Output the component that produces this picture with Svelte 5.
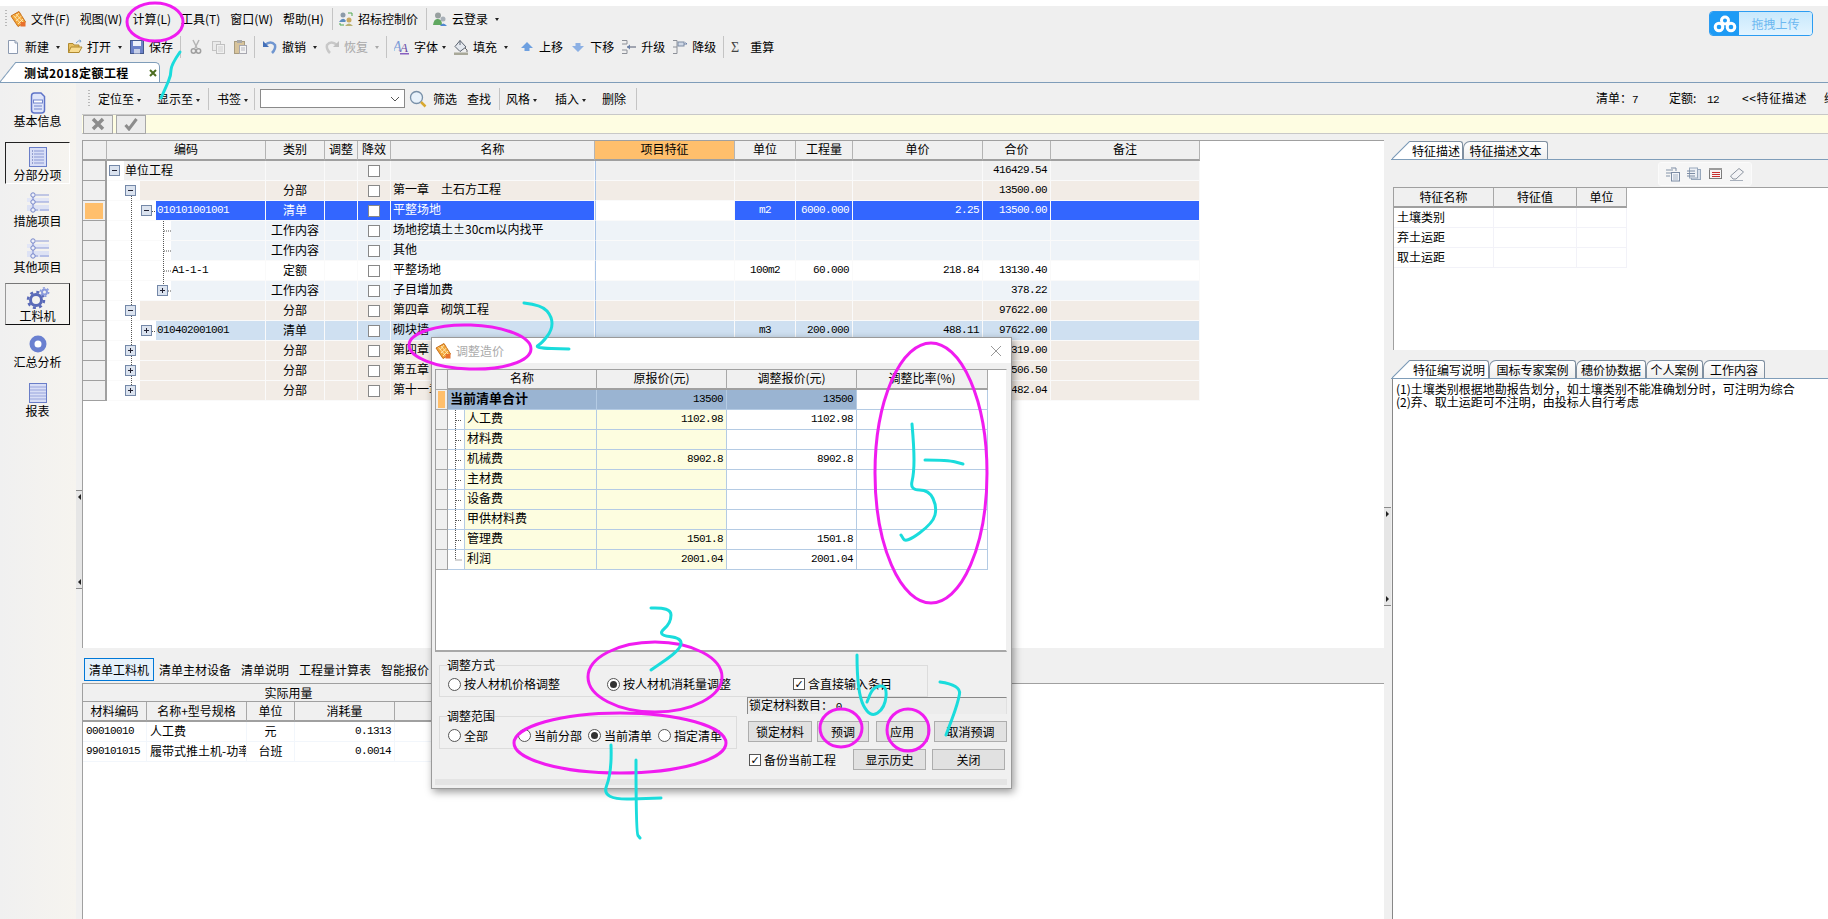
<script>
    const menu = ['文件(F)', '视图(W)', '计算(L)', '工具(T)', '窗口(W)', '帮助(H)'];

    const tools = [
        { icon: 'new', label: '新建', caret: true },
        { icon: 'open', label: '打开', caret: true },
        { icon: 'save', label: '保存' },
        { sep: true },
        { icon: 'cut' }, { icon: 'copy' }, { icon: 'paste' },
        { sep: true },
        { icon: 'undo', label: '撤销', caret: true },
        { icon: 'redo', label: '恢复', caret: true, dim: true },
        { sep: true },
        { icon: 'font', label: '字体', caret: true, tight: true },
        { icon: 'fill', label: '填充', caret: true, roomy: true },
        { icon: 'up', label: '上移' },
        { icon: 'down', label: '下移', roomy: false },
        { icon: 'promote', label: '升级' },
        { icon: 'demote', label: '降级' },
        { sep: true }
    ];

    const side = [
        { icon: 'sdoc', label: '基本信息' },
        { icon: 'slist', label: '分部分项', cls: 'm12 pressed' },
        { icon: 'stree', label: '措施项目' },
        { icon: 'stree', label: '其他项目' },
        { icon: 'sgear', label: '工料机', cls: 'm7 raised' },
        { icon: 'sring', label: '汇总分析' },
        { icon: 'sreport', label: '报表', cls: 'm7' }
    ];

    const rows = [
        { lv: 0, box: 'minus', kind: 'root', code: '单位工程', cjk: true, total: '416429.54' },
        { lv: 1, box: 'minus', kind: 'fb', type: '分部', name: '第一章　土石方工程', total: '13500.00' },
        { lv: 2, box: 'minus', kind: 'sel', code: '010101001001', type: '清单', name: '平整场地', unit: 'm2', qty: '6000.000', price: '2.25', total: '13500.00' },
        { lv: 3, kind: 'wc', type: '工作内容', name: '场地挖填土±30cm以内找平' },
        { lv: 3, kind: 'wc', type: '工作内容', name: '其他' },
        { lv: 3, kind: 'de', code: 'A1-1-1', type: '定额', name: '平整场地', unit: '100m2', qty: '60.000', price: '218.84', total: '13130.40' },
        { lv: 3, box: 'plus', kind: 'wc', type: '工作内容', name: '子目增加费', total: '378.22' },
        { lv: 1, box: 'minus', kind: 'fb', type: '分部', name: '第四章　砌筑工程', total: '97622.00' },
        { lv: 2, box: 'plus', kind: 'qd', code: '010402001001', type: '清单', name: '砌块墙', unit: 'm3', qty: '200.000', price: '488.11', total: '97622.00' },
        { lv: 1, box: 'plus', kind: 'fb', type: '分部', name: '第四章', total: '12319.00' },
        { lv: 1, box: 'plus', kind: 'fb', type: '分部', name: '第五章', total: '45506.50' },
        { lv: 1, box: 'plus', kind: 'fb', type: '分部', name: '第十一章', total: '76482.04' }
    ];

    const costs = [
        ['人工费', '1102.98', '1102.98'],
        ['材料费', '', ''],
        ['机械费', '8902.8', '8902.8'],
        ['主材费', '', ''],
        ['设备费', '', ''],
        ['甲供材料费', '', ''],
        ['管理费', '1501.8', '1501.8'],
        ['利润', '2001.04', '2001.04']
    ];

    const ink = [
        [[180, 52], [171, 65], [171, 75], [166, 87], [161, 98]],
        [[524, 303], [542, 305], [552, 317], [552, 330], [542, 343], [534, 348], [569, 349]],
        [[912, 424], [914, 447], [914, 473], [910, 490], [929, 490], [937, 507], [933, 523], [906, 543], [901, 535]],
        [[925, 460], [948, 460], [963, 464]],
        [[651, 608], [671, 607], [671, 623], [657, 635], [682, 638], [680, 650], [651, 670]],
        [[611, 745], [612, 772], [601, 800], [661, 798]],
        [[636, 760], [636, 833], [640, 838]],
        [[857, 655], [857, 693], [870, 718], [885, 708], [887, 685], [873, 687], [867, 702]],
        [[940, 682], [961, 685], [958, 703], [946, 735]]
    ];

    const rings = [
        [155, 22, 28, 19, 0],
        [470, 347, 61, 22, 2],
        [931, 473, 56, 130, 0],
        [655, 677, 67, 35, 0],
        [620, 743, 106, 30, 0],
        [841, 728, 21, 19, 0],
        [908, 730, 21, 21, 0]
    ];

    // pen strokes, rounded through the midpoints
    const smooth = (pts) => {
        let d = `M${pts[0][0]} ${pts[0][1]}`;
        for (let i = 1; i < pts.length - 1; i++) {
            const mx = (pts[i][0] + pts[i + 1][0]) / 2;
            const my = (pts[i][1] + pts[i + 1][1]) / 2;
            d += ` Q${pts[i][0]} ${pts[i][1]} ${mx} ${my}`;
        }
        const last = pts[pts.length - 1];
        return `${d} L${last[0]} ${last[1]}`;
    };
</script>

{#snippet ic(n)}
    <svg class="ic" viewBox="0 0 16 16" width="16" height="16">
        {#if n === 'app'}
            <path d="M1 5 L9 0.500 L15.500 11 L8 15.500 Z" fill="#f2a63a" stroke="#c8701c" />
            <path d="M3.500 4.500 L11 13 M6 3 L13 11 M9 2 L5 7 M11.500 5 L6 10 M13 8 L8 13" stroke="#ffe9b4" stroke-width=".9" />
            <rect x="10.500" y="11" width="5" height="4.500" fill="#e8702c" />
        {:else if n === 'people'}
            <circle cx="5" cy="4" r="2.500" fill="#8c9aa8" />
            <path d="M1 11 Q5 5 8 10 L7 11 Z" fill="#5c8cc0" />
            <circle cx="11" cy="9" r="2.500" fill="#c8a860" />
            <path d="M7 15 Q11 10 15 15 Z" fill="#b8b070" />
            <path d="M10 2 h4 v3 M6 14 h-4 v-2" fill="none" stroke="#50a850" />
        {:else if n === 'cloud'}
            <circle cx="6" cy="4.500" r="3" fill="#98a0a0" />
            <path d="M1 14 Q2 7 6 8 Q10 8 10 14 Z" fill="#60a860" />
            <circle cx="11" cy="8" r="2.500" fill="#a8b0b8" />
            <path d="M8 15 Q11 10 15 15 Z" fill="#5088d0" />
        {:else if n === 'new'}
            <path d="M3.500 1.500 H10 L12.500 4 V14.500 H3.500 Z" fill="#fbfcff" stroke="#8c9ab0" />
            <path d="M10 1.500 V4 H12.500" fill="#dde3ee" stroke="#8c9ab0" />
        {:else if n === 'open'}
            <path d="M1.500 13.500 V4.500 H6 L7 6 H12 V13.500 Z" fill="#e8c060" stroke="#b08a30" />
            <path d="M1.500 13.500 L4 8 H15 L12 13.500 Z" fill="#f8dc90" stroke="#b08a30" />
            <path d="M9 4 Q11 1 14 2 M14 2 L12.500 1 M14 2 L13 3.500" fill="none" stroke="#7aa0c8" />
        {:else if n === 'save'}
            <rect x="1.500" y="1.500" width="13" height="13" fill="#6c82c8" stroke="#44588c" />
            <rect x="4" y="2" width="8" height="5" fill="#eef1fa" />
            <rect x="5" y="10" width="6" height="4.500" fill="#c8d0e8" />
        {:else if n === 'cut'}
            <path d="M5 1 L9 9 M11 1 L7 9" stroke="#b4b4b4" stroke-width="1.500" />
            <circle cx="5.500" cy="12" r="2.200" fill="none" stroke="#a0a0a0" stroke-width="1.500" />
            <circle cx="10.500" cy="12" r="2.200" fill="none" stroke="#a0a0a0" stroke-width="1.500" />
        {:else if n === 'copy'}
            <rect x="2.500" y="2.500" width="8" height="9" fill="#eaeaea" stroke="#c4c4c4" />
            <rect x="6.500" y="5.500" width="8" height="9" fill="#f0f0f0" stroke="#c0c0c0" />
            <path d="M8 8 h5 M8 10 h5 M8 12 h5" stroke="#d0d0d0" />
        {:else if n === 'paste'}
            <rect x="2.500" y="2.500" width="10" height="12" fill="#d8c49c" stroke="#a89c80" />
            <rect x="5" y="1" width="5" height="3" fill="#a8a8a8" />
            <rect x="7.500" y="6.500" width="7" height="8" fill="#f4f4f4" stroke="#a8a8b0" />
            <path d="M9 9 h4 M9 11 h4" stroke="#b8b8c0" />
        {:else if n === 'undo' || n === 'redo'}
            <g transform={n === 'redo' ? 'translate(16 0) scale(-1 1)' : ''}>
                <path d="M3 6 Q9 1 13 6 Q14 10 10 14" fill="none" stroke={n === 'redo' ? '#c8c8c8' : '#7096d0'} stroke-width="2.500" />
                <path d="M1 2 V8 H7 Z" fill={n === 'redo' ? '#c0c0c0' : '#4470b8'} />
            </g>
        {:else if n === 'font'}
            <text x="-1" y="12" font-size="14" font-style="italic" font-family="Liberation Serif" fill="#7c9cd8">A</text>
            <text x="6" y="13" font-size="13" font-style="italic" font-family="Liberation Serif" fill="#6c50a8">A</text>
            <rect x="6" y="14" width="9" height="1.500" fill="#8860c0" />
        {:else if n === 'fill'}
            <path d="M7 1.500 L13 8 L7 12.500 L2 7.500 Z" fill="#e4e8ee" stroke="#5c6470" />
            <path d="M7 1.500 V6" stroke="#5c6470" />
            <rect x="1" y="13.500" width="14" height="2.500" fill="#a8a898" />
            <path d="M12 9 Q15 11 14 13" fill="none" stroke="#666" />
        {:else if n === 'up'}
            <path d="M8 3 L14 9 H10.500 V12 H5.500 V9 H2 Z" fill="#6ea0e0" />
        {:else if n === 'down'}
            <path d="M8 13 L14 7 H10.500 V4 H5.500 V7 H2 Z" fill="#8cb0e4" />
        {:else if n === 'promote'}
            <path d="M1 1.500 H6 V5 H1 M1 11 H6 V14.500 H1" fill="none" stroke="#8c9098" />
            <path d="M6 8 H15" stroke="#a0a4b0" stroke-width="2" />
            <path d="M9 5.500 L6 8 L9 10.500 Z" fill="#6a80a8" />
        {:else if n === 'demote'}
            <path d="M1 1.500 H5 V14.500 H1 M1 8 H5" fill="none" stroke="#8c9098" />
            <rect x="6" y="3" width="6" height="4" fill="#cfd8e6" stroke="#7c8ca4" />
            <path d="M12 5 H15 M15 5 L13.500 3.500" stroke="#6a80a8" />
        {:else if n === 'sigma'}
            <text x="1" y="13" font-size="14" font-family="Liberation Serif" fill="#444">Σ</text>
        {:else if n === 'mini1'}
            <path d="M1 4 H8 M1 7 H8 M1 10 H5" stroke="#8494a8" />
            <rect x="6.500" y="6.500" width="8" height="8.500" fill="#f4f6fa" stroke="#7c8ca4" />
            <path d="M8 9 h5 M8 11 h5 M8 13 h5" stroke="#a8b4c4" />
            <path d="M6 2 H11 V5" fill="none" stroke="#7c8ca4" />
        {:else if n === 'mini2'}
            <rect x="5.500" y="3.500" width="9" height="10" fill="#d8dfea" stroke="#98a8bc" />
            <rect x="3.500" y="2" width="8" height="10" fill="#eef1f6" stroke="#98a8bc" />
            <path d="M1 5 H9 M1 7.500 H9 M1 10 H9" stroke="#7c8ca4" />
        {:else if n === 'mini3'}
            <rect x="1.500" y="2.500" width="12" height="10" fill="#f6f6f6" stroke="#7c7c7c" />
            <rect x="1" y="2" width="13" height="2" fill="#9c9c9c" />
            <path d="M4 6.500 H12 M4 8.500 H12 M4 10.500 H12" stroke="#c83030" />
        {:else if n === 'mini4'}
            <path d="M1.500 10 L10 2.500 L14.500 6 L7 13 H4 Z" fill="#f4f4f6" stroke="#8c94a0" />
            <path d="M1 14.500 H14" stroke="#a8b0bc" />
        {/if}
    </svg>
{/snippet}

{#snippet sideicon(n)}
    <svg class="sic" viewBox="0 0 24 22" width="24" height="22">
        {#if n === 'sdoc'}
            <path d="M5.500 4 Q5.500 1 8.500 1 H15 L18.500 4.500 V18 Q18.500 21 15.500 21 H8.500 Q5.500 21 5.500 18 Z" fill="#dfe5fa" stroke="#5f74c8" stroke-width="1.500" />
            <rect x="7.500" y="8" width="9" height="3" fill="#fff" stroke="#7084cc" />
            <path d="M8 14 H16 M8 17 H16" stroke="#7084cc" />
        {:else if n === 'slist' || n === 'sreport'}
            <rect x="3.500" y="1.500" width="17" height="19" fill="#d8def6" stroke="#6a7ec8" />
            {#if n === 'slist'}
                <path d="M8 5 H18 M8 8 H18 M8 11 H18 M8 14 H18 M8 17 H18" stroke="#8a98d4" stroke-width="1.200" />
                <path d="M6 5 H7 M6 8 H7 M6 11 H7 M6 14 H7 M6 17 H7" stroke="#5060a8" />
            {:else}
                <path d="M4 5 H20 M4 8 H20 M4 11 H20 M4 14 H20 M4 17 H20" stroke="#97a4dc" stroke-width="1.200" />
            {/if}
        {:else if n === 'stree'}
            <rect x="1" y="6" width="22" height="4" fill="#e2e6f6" />
            <rect x="1" y="13" width="22" height="6" fill="#dde2f4" />
            <path d="M7 3 V18 H12 M7 10 H12 M10 3 H23 M10 10 H23 M14 18 H23" fill="none" stroke="#8c9ad8" stroke-width="1.200" />
            <circle cx="7" cy="3" r="2.200" fill="#eef0fa" stroke="#7484c8" />
            <circle cx="7" cy="10" r="2.200" fill="#eef0fa" stroke="#7484c8" />
            <circle cx="7" cy="18" r="2.200" fill="#eef0fa" stroke="#7484c8" />
        {:else if n === 'sgear'}
            <circle cx="10" cy="13" r="5.500" fill="none" stroke="#5a6ab8" stroke-width="3" />
            <circle cx="10" cy="13" r="8" fill="none" stroke="#5a6ab8" stroke-width="2.500" stroke-dasharray="3 3.300" />
            <circle cx="18.500" cy="5" r="2.500" fill="none" stroke="#8a9adc" stroke-width="2" />
            <circle cx="18.500" cy="5" r="4.200" fill="none" stroke="#8a9adc" stroke-width="1.500" stroke-dasharray="2 2.400" />
        {:else if n === 'sring'}
            <circle cx="12" cy="11" r="6" fill="#fff" stroke="#6a80d0" stroke-width="5" />
        {/if}
    </svg>
{/snippet}

{#snippet treebox(kind)}
    <svg class="tb" viewBox="0 0 11 11" width="11" height="11">
        <rect x=".5" y=".5" width="10" height="10" fill="#dbe3ef" stroke="#7488a8" />
        <path d={kind === 'plus' ? 'M3 5.500 H8 M5.500 3 V8' : 'M3 5.500 H8'} stroke="#223" />
    </svg>
{/snippet}

<div class="app">
    <div class="topline"></div>

    <header class="top">
        <div class="menubar">
            <span class="grip"></span>
            {@render ic('app')}
            {#each menu as m}<span class="menu">{m}</span>{/each}
            <span class="sep"></span>
            <span class="ti">{@render ic('people')}<span>招标控制价</span></span>
            <span class="sep"></span>
            <span class="ti">{@render ic('cloud')}<span>云登录</span><i class="caret"></i></span>
        </div>
        <div class="toolbar">
            {#each tools as t}
                {#if t.sep}
                    <span class="sep"></span>
                {:else}
                    <span class="ti" class:dim={t.dim} class:tight={t.tight} class:only={!t.label} class:roomy={t.roomy}>
                        {@render ic(t.icon)}
                        {#if t.label}<span>{t.label}</span>{/if}
                        {#if t.caret}<i class="caret"></i>{/if}
                    </span>
                {/if}
            {/each}
            <span class="ti sigma">{@render ic('sigma')}<span>重算</span></span>
        </div>
        <div class="doctabs">
            <div class="doctab">
                <b>测试2018定额工程</b>
                <svg viewBox="0 0 8 8" width="8" height="8"><path d="M1 1 L7 7 M7 1 L1 7" stroke="#4c6c20" stroke-width="2" /></svg>
            </div>
        </div>
        <div class="upload">
            <span class="upload-ic">
                <svg viewBox="0 0 24 18" width="24" height="18">
                    <g fill="none" stroke="#fff" stroke-width="3">
                        <circle cx="12" cy="5.500" r="3.500" />
                        <circle cx="6" cy="12" r="3.800" />
                        <circle cx="18" cy="12" r="3.800" />
                    </g>
                </svg>
            </span>
            <span class="upload-txt">拖拽上传</span>
        </div>
    </header>

    <div class="body">
        <aside class="side">
            {#each side as s}
                <div class="sideitem {s.cls || ''}">
                    {@render sideicon(s.icon)}
                    <span>{s.label}</span>
                </div>
            {/each}
        </aside>
        <div class="splitter left"><span class="handle"><i class="tri-l"></i><i class="tri-l"></i></span></div>

        <div class="work">
            <div class="toolbar2">
                <span class="grip"></span>
                <span class="t2">定位至<i class="caret"></i></span>
                <span class="t2 wide">显示至<i class="caret"></i></span>
                <span class="sep s1"></span>
                <span class="t2">书签<i class="caret"></i></span>
                <span class="sep"></span>
                <span class="combo">
                    <svg viewBox="0 0 10 6" width="10" height="6"><path d="M1 1 L5 5 L9 1" fill="none" stroke="#555" /></svg>
                </span>
                <svg class="lens" viewBox="0 0 18 18" width="18" height="18">
                    <circle cx="7.500" cy="7.500" r="6" fill="#e8f2fb" stroke="#7890a8" stroke-width="1.300" />
                    <path d="M12 12 L16.500 16.500" stroke="#d8a830" stroke-width="2.500" />
                </svg>
                <span class="t2">筛选</span>
                <span class="t2 mid">查找</span>
                <span class="sep s3"></span>
                <span class="t2">风格<i class="caret"></i></span>
                <span class="t2 wider">插入<i class="caret"></i></span>
                <span class="t2 wide">删除</span>
                <span class="sep s4"></span>
                <span class="fill"></span>
                <div class="stats">
                    <span>清单：<tt>7</tt></span>
                    <span>定额: <tt class="far">12</tt></span>
                    <span class="feat-link">&lt;&lt;特征描述</span>
                    <span>综</span>
                </div>
            </div>

            <div class="yellow">
                <button class="ybtn" aria-label="取消">
                    <svg viewBox="0 0 14 14" width="14" height="14"><path d="M2 2 L12 12 M12 2 L2 12" stroke="#8c8c8c" stroke-width="3.500" /></svg>
                </button>
                <button class="ybtn" aria-label="确定">
                    <svg viewBox="0 0 14 14" width="14" height="14"><path d="M1.500 8 L5 12 L12.500 2" fill="none" stroke="#8c8c8c" stroke-width="3" /></svg>
                </button>
            </div>

            <div class="panes">
                <section class="center">
                    <div class="gridbox">
                        <div class="row head">
                            <span class="rh"></span>
                            <span>编码</span><span>类别</span><span>调整</span><span>降效</span><span>名称</span>
                            <span class="hot">项目特征</span>
                            <span>单位</span><span>工程量</span><span>单价</span><span>合价</span><span>备注</span>
                        </div>
                        <div class="rowsbox">
                            {#each rows as r}
                                <div class="row {r.kind}">
                                    <span class="rh"><i></i></span>
                                    <span class="codecell">
                                        <span class="indent lv{r.lv}">{#if r.box}{@render treebox(r.box)}{/if}</span>
                                        <span class="code" class:cjk={r.cjk}>{r.code || ''}</span>
                                    </span>
                                    <span class="ctr">{r.type || ''}</span>
                                    <span></span>
                                    <span class="ctr"><i class="chk"></i></span>
                                    <span class="nm">{r.name || ''}</span>
                                    <span class="feat"></span>
                                    <span class="ctr mono">{r.unit || ''}</span>
                                    <span class="rt mono">{r.qty || ''}</span>
                                    <span class="rt mono">{r.price || ''}</span>
                                    <span class="rt mono">{r.total || ''}</span>
                                    <span></span>
                                </div>
                            {/each}
                            <svg class="guides" width="70" height="240">
                                <g stroke="#555" stroke-dasharray="1 1" fill="none">
                                    <path d="M24.500 35 V225" />
                                    <path d="M40.500 45 V50 M40.500 165 V170" />
                                    <path d="M56.500 60 V130" />
                                    <path d="M57 70 H64 M57 90 H64 M57 110 H64 M61 130 H64" />
                                    <path d="M45 50.500 H49 M45 170.500 H49" />
                                </g>
                            </svg>
                        </div>
                    </div>

                    <div class="subtabs">
                        <span class="subtab on">清单工料机</span>
                        <span class="subtab">清单主材设备</span>
                        <span class="subtab">清单说明</span>
                        <span class="subtab">工程量计算表</span>
                        <span class="subtab">智能报价</span>
                    </div>

                    <div class="lower">
                        <div class="lhead1">实际用量</div>
                        <div class="lrow lhead">
                            <span>材料编码</span><span>名称+型号规格</span><span>单位</span><span>消耗量</span><span class="lc5">变更</span>
                        </div>
                        <div class="lrow">
                            <span class="mono lft">00010010</span><span class="lft">人工费</span><span>元</span><span class="mono rgt">0.1313</span><span></span>
                        </div>
                        <div class="lrow">
                            <span class="mono lft">990101015</span><span class="lft clip">履带式推土机-功率</span><span>台班</span><span class="mono rgt">0.0014</span><span></span>
                        </div>
                    </div>
                </section>

                <div class="splitter right"><span class="handle"><i class="tri-r"></i><i class="tri-r"></i></span></div>

                <section class="rightpane">
                    <div class="rtabs top2">
                        <span class="rtab first">特征描述</span>
                        <span class="rtab">特征描述文本</span>
                    </div>
                    <div class="minibar">
                        <div class="minibox">
                            {@render ic('mini1')}{@render ic('mini2')}{@render ic('mini3')}{@render ic('mini4')}
                        </div>
                    </div>
                    <div class="featbox">
                        <div class="frow fhead"><span>特征名称</span><span>特征值</span><span>单位</span></div>
                        <div class="frow"><span class="lft">土壤类别</span><span></span><span></span></div>
                        <div class="frow"><span class="lft">弃土运距</span><span></span><span></span></div>
                        <div class="frow"><span class="lft">取土运距</span><span></span><span></span></div>
                    </div>
                    <div class="rtabs bottom5">
                        <span class="rtab first">特征编写说明</span>
                        <span class="rtab">国标专家案例</span>
                        <span class="rtab">穗价协数据</span>
                        <span class="rtab">个人案例</span>
                        <span class="rtab">工作内容</span>
                    </div>
                    <div class="note">
                        <div>(1)土壤类别根据地勘报告划分，如土壤类别不能准确划分时，可注明为综合</div>
                        <div>(2)弃、取土运距可不注明，由投标人自行考虑</div>
                    </div>
                </section>
            </div>
        </div>
    </div>

    <div class="dialog">
        <div class="dtitle">
            {@render ic('app')}
            <span class="dname">调整造价</span>
            <svg class="dclose" viewBox="0 0 12 12" width="12" height="12"><path d="M1 1 L11 11 M11 1 L1 11" stroke="#999" /></svg>
        </div>
        <div class="dpanel">
            <div class="drow dhead">
                <span class="drh"></span><span>名称</span><span>原报价(元)</span><span>调整报价(元)</span><span>调整比率(%)</span>
            </div>
            <div class="drow dtotal">
                <span class="drh"><i></i></span><span class="dsum">当前清单合计</span><span class="mono rt">13500</span><span class="mono rt">13500</span><span class="blank"></span>
            </div>
            {#each costs as c}
                <div class="drow">
                    <span class="drh"></span>
                    <span class="dcname"><b>{c[0]}</b></span>
                    <span class="mono rt ylw">{c[1]}</span>
                    <span class="mono rt">{c[2]}</span>
                    <span class="blank"></span>
                </div>
            {/each}
            <svg class="dguides" width="16" height="160">
                <g stroke="#555" stroke-dasharray="1 1" fill="none">
                    <path d="M7.500 0 V150 H14" />
                    <path d="M8 10.500 H14 M8 30.500 H14 M8 50.500 H14 M8 70.500 H14 M8 90.500 H14 M8 110.500 H14 M8 130.500 H14" />
                </g>
            </svg>
        </div>

        <div class="dform">
            <fieldset class="group g1">
                <legend>调整方式</legend>
                <label class="opt"><i class="radio"></i>按人材机价格调整</label>
                <label class="opt o47"><i class="radio on"></i>按人材机消耗量调整</label>
                <label class="opt o62"><i class="cbox">✓</i>含直接输入条目</label>
            </fieldset>
            <div class="dlower">
                <fieldset class="group g2">
                    <legend>调整范围</legend>
                    <label class="opt"><i class="radio"></i>全部</label>
                    <label class="opt o30"><i class="radio"></i>当前分部</label>
                    <label class="opt o6"><i class="radio on"></i>当前清单</label>
                    <label class="opt o6"><i class="radio"></i>指定清单</label>
                </fieldset>
                <div class="dright">
                    <div class="locked">锁定材料数目： <tt>0</tt></div>
                    <div class="btnrow r1">
                        <button>锁定材料</button><button>预调</button><button>应用</button><button>取消预调</button>
                    </div>
                    <div class="btnrow r2">
                        <label class="opt"><i class="cbox">✓</i>备份当前工程</label>
                        <button class="b1">显示历史</button><button>关闭</button>
                    </div>
                </div>
            </div>
            <div class="dstrip"></div>
        </div>
    </div>

    <svg class="ink" width="1828" height="919">
        {#each rings as c}
            <ellipse cx={c[0]} cy={c[1]} rx={c[2]} ry={c[3]} transform="rotate({c[4]} {c[0]} {c[1]})" />
        {/each}
        {#each ink as p}
            <path d={smooth(p)} />
        {/each}
    </svg>
</div>

<style>
    :global(body) {
        margin: 0;
        background: #f0f0f0;
    }
    .app {
        position: relative;
        width: 1828px;
        height: 919px;
        overflow: hidden;
        display: flex;
        flex-direction: column;
        font: 12px/16px "Noto Sans CJK SC", "Liberation Sans", sans-serif;
        color: #000;
        background: #f0f0f0;
    }
    .mono, tt {
        font-family: "Liberation Mono", "Noto Sans CJK SC", monospace;
        font-size: 11px;
        letter-spacing: -.6px;
    }
    .topline {
        height: 6px;
        background: #fff;
    }

    /* top bars */
    .top {
        position: relative;
        background: #efefef;
        border-bottom: 1px solid #7f9db9;
        height: 76px;
    }
    .menubar {
        height: 26px;
        display: flex;
        align-items: center;
        gap: 10px;
        padding-left: 5px;
    }
    .menubar .menu {
        white-space: nowrap;
    }
    .menubar .grip {
        margin-right: -7px;
    }
    .menubar .ic {
        margin-right: -5px;
    }
    .menubar .ti .ic {
        margin-right: 0;
    }
    .menubar .sep {
        margin: 0 -5px 0 -2px;
    }
    .grip {
        width: 2px;
        height: 18px;
        margin-right: 2px;
        background: repeating-linear-gradient(#b8b8b8 0 1px, transparent 1px 3px);
    }
    .sep {
        width: 1px;
        height: 22px;
        background: #c4c4c4;
    }
    .ti {
        display: flex;
        align-items: center;
        gap: 4px;
        white-space: nowrap;
    }
    .ti.dim {
        color: #a8a8a8;
    }
    .caret {
        display: inline-block;
        width: 0;
        height: 0;
        margin-left: 3px;
        border: 2.500px solid transparent;
        border-top: 3px solid #222;
        border-bottom: 0;
    }
    .dim .caret {
        border-top-color: #a8a8a8;
    }
    .toolbar {
        height: 30px;
        display: flex;
        align-items: center;
        gap: 7px;
        padding-left: 5px;
    }
    .ti.only {
        margin-right: -1px;
    }
    .ti.tight .caret {
        margin-left: 0;
    }
    .ti.roomy {
        margin-right: 4px;
    }
    .sigma {
        gap: 4px;
        margin-left: -1px;
    }
    .doctabs {
        height: 20px;
        padding-left: 16px;
    }
    .doctab {
        position: relative;
        width: 144px;
        height: 20px;
        box-sizing: border-box;
        background: #fff;
        border: 1px solid #7f9db9;
        border-left: 0;
        border-bottom: 0;
        border-top-right-radius: 5px;
        display: flex;
        align-items: center;
        padding-left: 8px;
        gap: 20px;
    }
    .doctab::before, .rtab.first::before {
        content: "";
        position: absolute;
        top: -1px;
        bottom: 0;
        right: 100%;
        width: 16px;
        background: linear-gradient(to bottom right, transparent calc(50% - 1px), #7f9db9 50%, #fff calc(50% + 1px));
    }
    .doctab b {
        letter-spacing: .45px;
        white-space: nowrap;
    }
    .upload {
        position: absolute;
        top: 5px;
        right: 15px;
        width: 104px;
        height: 25px;
        box-sizing: border-box;
        display: flex;
        border: 1px solid #2b9cf2;
        border-radius: 4px;
        overflow: hidden;
    }
    .upload-ic {
        width: 29px;
        background: #1d9bf5;
        display: flex;
        align-items: center;
        justify-content: center;
    }
    .upload-txt {
        flex: 1;
        text-align: center;
        line-height: 23px;
        color: #6cb8f0;
        background: linear-gradient(#c8e8fc, #e2f4ff);
    }

    /* body */
    .body {
        flex: 1;
        display: flex;
        min-height: 0;
    }
    .side {
        width: 76px;
        padding-top: 5px;
        box-sizing: border-box;
        background: linear-gradient(to right, #f0f0f0, #f6f4ef);
        display: flex;
        flex-direction: column;
        align-items: flex-start;
        gap: 4px;
    }
    .sideitem {
        width: 65px;
        height: 42px;
        margin-left: 5px;
        box-sizing: border-box;
        border: 1px solid transparent;
        display: flex;
        flex-direction: column;
        align-items: center;
        padding-top: 3px;
        line-height: 14px;
        white-space: nowrap;
    }
    .sideitem .sic {
        flex: none;
    }
    .m12 {
        margin-top: 8px;
    }
    .m7 {
        margin-top: 3px;
    }
    .pressed {
        border-color: #222 #fff #fff #222;
    }
    .raised {
        border-color: #777 #111 #111 #999;
    }
    .splitter {
        width: 6px;
        flex: none;
        background: #f0f0f0;
    }
    .splitter.left {
        padding-top: 407px;
    }
    .splitter.right {
        width: 7px;
        padding-top: 373px;
    }
    .handle {
        display: flex;
        flex-direction: column;
        justify-content: space-between;
        align-items: center;
        height: 99px;
        padding: 3px 0;
        box-sizing: border-box;
        background: #e6e6e6;
        border: 1px solid #8a8a8a;
        border-width: 1px 0;
    }
    .tri-l, .tri-r {
        width: 0;
        height: 0;
        border: 3px solid transparent;
    }
    .tri-l {
        border-right-color: #222;
        border-left: 0;
    }
    .tri-r {
        border-left-color: #222;
        border-right: 0;
    }

    .work {
        flex: 1;
        min-width: 0;
        display: flex;
        flex-direction: column;
    }
    .toolbar2 {
        height: 31px;
        flex: none;
        box-sizing: border-box;
        display: flex;
        align-items: center;
        gap: 6px;
        padding-left: 6px;
    }
    .t2 {
        white-space: nowrap;
    }
    .t2 .caret {
        margin-left: 3px;
        vertical-align: 2px;
    }
    .t2.wide {
        margin-left: 10px;
    }
    .t2.wider {
        margin-left: 12px;
    }
    .t2.mid {
        margin-left: 4px;
    }
    .s1 {
        margin: 0 2px;
    }
    .s3 {
        margin-left: 2px;
    }
    .s4 {
        margin-left: 4px;
    }
    .combo {
        width: 145px;
        height: 19px;
        margin-left: -1px;
        box-sizing: border-box;
        background: #fff;
        border: 1px solid #8a8a8a;
        display: flex;
        align-items: center;
        justify-content: flex-end;
        padding-right: 4px;
    }
    .lens {
        margin-left: -2px;
    }
    .fill {
        flex: 1;
    }
    .stats {
        width: 232px;
        overflow: hidden;
        display: flex;
        gap: 31px;
        white-space: nowrap;
    }
    .stats .far {
        margin-left: 8px;
    }
    .stats .feat-link {
        letter-spacing: .6px;
        margin-left: -8px;
    }
    .stats span:last-child {
        margin-left: -14px;
    }
    .yellow {
        height: 20px;
        flex: none;
        box-sizing: border-box;
        background: #fefde2;
        border-top: 1px solid #c8c8c8;
        border-bottom: 1px solid #c8c8c8;
        display: flex;
        align-items: center;
        gap: 3px;
        padding-left: 1px;
    }
    .ybtn {
        width: 30px;
        height: 19px;
        padding: 0;
        background: #ececec;
        border: 1px solid #a8a8a8;
        display: flex;
        align-items: center;
        justify-content: center;
    }

    .panes {
        flex: 1;
        min-height: 0;
        display: flex;
    }
    .center {
        width: 1302px;
        flex: none;
        padding-top: 6px;
        box-sizing: border-box;
        display: flex;
        flex-direction: column;
    }

    /* main grid */
    .gridbox {
        height: 508px;
        flex: none;
        box-sizing: border-box;
        background: #fff;
        border-top: 1px solid #a0a0a0;
        border-left: 1px solid #a0a0a0;
    }
    .row {
        width: 1117px;
        height: 20px;
        display: grid;
        grid-template-columns: 24px 159px 59px 33px 33px 204px 140px 61px 57px 130px 68px 149px;
        line-height: 17px;
    }
    .row > span {
        box-sizing: border-box;
        border-right: 1px solid #fafafa;
        border-bottom: 1px solid #fafafa;
        white-space: nowrap;
        overflow: hidden;
    }
    .row.head {
        height: 20px;
        text-align: center;
    }
    .row.head > span {
        background: #f0f0f0;
        border-right: 1px solid #b4b4b4;
        border-bottom: 2px solid #a0a0a0;
        line-height: 16px;
    }
    .row.head > .hot {
        background: #ffbf6c;
    }
    .row .rh {
        background: #f0f0f0;
        border-right: 2px solid #a0a0a0;
        border-bottom: 1px solid #a0a0a0;
        padding: 2px 2px 1px 2px;
    }
    .rh i {
        display: none;
    }
    .sel .rh i {
        display: block;
        height: 100%;
        background: #ffbf6c;
    }
    .rowsbox {
        position: relative;
    }
    .guides {
        position: absolute;
        left: 24px;
        top: 0;
        pointer-events: none;
    }
    .codecell {
        display: flex;
    }
    .indent {
        flex: none;
        background: #fff;
        box-sizing: border-box;
        display: flex;
        align-items: center;
        justify-content: flex-end;
    }
    .lv0 { width: 17px; padding-right: 4px; }
    .lv1 { width: 33px; padding-right: 4px; }
    .lv2 { width: 49px; padding-right: 4px; }
    .lv3 { width: 64px; padding-right: 3px; }
    .tb {
        position: relative;
        z-index: 1;
    }
    .code {
        flex: 1;
        font-family: "Liberation Mono", monospace;
        font-size: 11px;
        letter-spacing: -.6px;
        line-height: 19px;
        padding-left: 1px;
    }
    .code.cjk {
        font: inherit;
        letter-spacing: 0;
        line-height: 17px;
    }
    .ctr {
        text-align: center;
    }
    .mono.ctr, .mono.rt {
        line-height: 19px;
    }
    .rt {
        text-align: right;
        padding-right: 3px;
    }
    .nm {
        padding-left: 2px;
        line-height: 15px;
    }
    .row .feat {
        border-left: 1px solid #a8c4e8;
    }
    .chk {
        display: inline-block;
        width: 12px;
        height: 12px;
        box-sizing: border-box;
        margin-top: 4px;
        background: #fff;
        border: 1px solid #888;
    }
    .root > span:not(.rh) { background: #f0f0f0; }
    .fb > span:not(.rh) { background: #f2ece6; }
    .sel > span:not(.rh) { background: #3366ff; color: #fff; }
    .sel > .feat { background: #fff !important; }
    .wc > span:not(.rh) { background: #eef3f8; }
    .de > span:not(.rh) { background: #fff; }
    .qd > span:not(.rh) { background: #cfe0f1; }
    .row > .codecell { background: transparent !important; }
    .root .code { background: #f0f0f0; }
    .fb .code { background: #f2ece6; }
    .sel .code { background: #3366ff; color: #fff; }
    .wc .code { background: #eef3f8; }
    .de .code { background: #fff; }
    .qd .code { background: #cfe0f1; }

    /* lower part */
    .subtabs {
        height: 35px;
        flex: none;
        box-sizing: border-box;
        padding: 10px 0 0 2px;
        display: flex;
        gap: 10px;
    }
    .subtab {
        height: 23px;
        line-height: 23px;
        white-space: nowrap;
    }
    .subtab.on {
        box-sizing: border-box;
        padding: 0 4px;
        line-height: 21px;
        margin-right: -5px;
        background: #e5f1fb;
        border: 1px solid #0078d7;
    }
    .lower {
        flex: 1;
        background: #fff;
        border-top: 1px solid #a0a0a0;
        border-left: 1px solid #a0a0a0;
    }
    .lhead1 {
        width: 411px;
        height: 17px;
        line-height: 17px;
        text-align: center;
        background: #f0f0f0;
        border-bottom: 1px solid #a0a0a0;
    }
    .lrow {
        width: 411px;
        height: 20px;
        display: grid;
        grid-template-columns: 64px 100px 48px 100px 99px;
        line-height: 18px;
        text-align: center;
    }
    .lrow > span {
        box-sizing: border-box;
        border-right: 1px solid #f2f6fb;
        border-bottom: 1px solid #f2f6fb;
        white-space: nowrap;
        overflow: hidden;
    }
    .lhead > span {
        background: #f0f0f0;
        border-right: 1px solid #a8a8a8;
        border-bottom: 2px solid #a0a0a0;
        line-height: 17px;
    }
    .lft {
        text-align: left;
        padding-left: 3px;
    }
    .lrow .rgt {
        text-align: right;
        padding-right: 3px;
    }

    /* right side */
    .rightpane {
        flex: 1;
        min-width: 0;
        display: flex;
        flex-direction: column;
    }
    .rtabs {
        display: grid;
        flex: none;
        box-sizing: border-box;
        border-bottom: 1px solid #7f9db9;
        padding-left: 19px;
    }
    .rtabs.top2 {
        height: 26px;
        padding-top: 7px;
        grid-template-columns: 53px 85px;
    }
    .rtabs.bottom5 {
        height: 29px;
        padding-top: 10px;
        margin-top: 0;
        grid-template-columns: 79px 87px 70px 57px 62px;
    }
    .rtab {
        position: relative;
        box-sizing: border-box;
        text-align: center;
        line-height: 17px;
        white-space: nowrap;
        border: 1px solid #7f8fa0;
        border-bottom: 0;
        border-left: 1px solid #7f8fa0;
        border-top-left-radius: 7px;
        border-top-right-radius: 3px;
        background: linear-gradient(#fff, #eee);
    }
    .rtab.first {
        background: #fff;
        border-left: 0;
        border-top-left-radius: 0;
    }
    .rtab.first::before {
        width: 18px;
    }
    .minibar {
        height: 27px;
        flex: none;
        box-sizing: border-box;
        display: flex;
        justify-content: flex-end;
        padding: 2px 76px 1px 0;
    }
    .minibox {
        width: 94px;
        box-sizing: border-box;
        background: #f6f6f6;
        border: 1px solid #fbfbfb;
        border-radius: 3px;
        display: flex;
        align-items: center;
        justify-content: space-around;
        padding: 0 3px;
    }
    .featbox {
        height: 163px;
        flex: none;
        margin-left: 2px;
        box-sizing: border-box;
        background: #fff;
        border-top: 1px solid #a0a0a0;
        border-left: 1px solid #a0a0a0;
    }
    .frow {
        width: 233px;
        height: 20px;
        display: grid;
        grid-template-columns: 100px 83px 50px;
        line-height: 17px;
    }
    .frow > span {
        box-sizing: border-box;
        border-right: 1px solid #f2f2f8;
        border-bottom: 1px solid #f2f2f8;
    }
    .fhead {
        text-align: center;
    }
    .fhead > span {
        background: #f0f0f0;
        border-right: 1px solid #a8a8a8;
        border-bottom: 2px solid #a0a0a0;
    }
    .note {
        flex: 1;
        margin-left: 1px;
        box-sizing: border-box;
        padding: 3px 0 0 3px;
        background: #fff;
        border-left: 1px solid #888;
        line-height: 13px;
        white-space: nowrap;
    }

    /* dialog */
    .dialog {
        position: absolute;
        left: 431px;
        top: 337px;
        width: 581px;
        height: 452px;
        box-sizing: border-box;
        background: #f0f0f0;
        border: 1px solid #9a9a9a;
        box-shadow: 2px 3px 8px rgba(0, 0, 0, .4);
        display: flex;
        flex-direction: column;
    }
    .dtitle {
        height: 25px;
        flex: none;
        background: #fff;
        display: flex;
        align-items: center;
        padding-left: 3px;
        gap: 5px;
    }
    .dname {
        color: #aaa;
    }
    .dclose {
        margin-left: auto;
        margin-right: 9px;
    }
    .dpanel {
        position: relative;
        flex: none;
        height: 283px;
        margin: 6px 4px 0 3px;
        box-sizing: border-box;
        background: #fff;
        border: 1px solid #a0a0a0;
        border-right-color: #f0f0f0;
        border-bottom: 2px solid #a8a8a8;
    }
    .drow {
        width: 552px;
        height: 20px;
        display: grid;
        grid-template-columns: 12px 149px 130px 130px 131px;
        line-height: 17px;
    }
    .drow > span {
        box-sizing: border-box;
        border-right: 1px solid #b4cbe4;
        border-bottom: 1px solid #b4cbe4;
        white-space: nowrap;
        overflow: hidden;
    }
    .drow > .drh {
        background: #f0f0f0;
        border-right: 1px solid #a0a0a0;
        border-bottom: 1px solid #a8a8a8;
    }
    .dhead {
        text-align: center;
    }
    .dhead > span {
        background: #f0f0f0;
        border-right: 1px solid #a8a8a8;
        border-bottom: 2px solid #a0a0a0;
        line-height: 16px;
    }
    .dtotal > span {
        background: #9ab4d2;
    }
    .dtotal > .blank {
        background: #fff;
    }
    .dtotal > .drh {
        padding: 1px 2px 1px 2px;
    }
    .dtotal .drh i {
        display: block;
        height: 100%;
        background: #ffbf6c;
    }
    .dsum {
        font-size: 13px;
        font-weight: 700;
        padding-left: 2px;
        line-height: 16px;
    }
    .dcname b {
        display: block;
        height: 100%;
        margin-left: 16px;
        padding-left: 2px;
        font-weight: 400;
        background: #fdfde0;
        border-left: 1px solid #b4cbe4;
        line-height: 16px;
    }
    .ylw {
        background: #fdfde0;
    }
    .dguides {
        position: absolute;
        left: 12px;
        top: 40px;
    }

    .dform {
        flex: 1;
        position: relative;
        padding: 6px 0 0 7px;
    }
    .group {
        margin: 0;
        padding: 0 0 0 8px;
        border: 1px solid #dcdcdc;
        display: flex;
        align-items: center;
        box-sizing: border-box;
        min-width: 0;
    }
    .group legend {
        padding: 0;
        margin-left: -1px;
        line-height: 14px;
    }
    .g1 {
        width: 489px;
        height: 39px;
    }
    .dlower {
        display: flex;
    }
    .g2 {
        margin-top: 12px;
        width: 298px;
        height: 40px;
    }
    .opt {
        display: flex;
        align-items: center;
        white-space: nowrap;
    }
    .o47 { margin-left: 47px; }
    .o62 { margin-left: 62px; }
    .o30 { margin-left: 30px; }
    .o6 { margin-left: 6px; }
    .radio {
        width: 13px;
        height: 13px;
        box-sizing: border-box;
        margin-right: 3px;
        border: 1px solid #555;
        border-radius: 50%;
        background: #fff;
        display: flex;
        align-items: center;
        justify-content: center;
    }
    .radio.on::after {
        content: "";
        width: 7px;
        height: 7px;
        border-radius: 50%;
        background: #333;
    }
    .cbox {
        width: 12px;
        height: 12px;
        box-sizing: border-box;
        margin-right: 3px;
        border: 1px solid #555;
        background: #fff;
        font: 11px/11px "DejaVu Sans", sans-serif;
        text-align: center;
    }
    .dright {
        margin-left: 10px;
        width: 260px;
    }
    .locked {
        height: 17px;
        box-sizing: border-box;
        line-height: 13px;
        padding-left: 1px;
        background: #ececec;
        border-top: 1px solid #888;
        border-left: 1px solid #888;
        border-right: 1px solid #e0e0e0;
    }
    .btnrow {
        display: flex;
        align-items: center;
        height: 21px;
    }
    .btnrow button {
        height: 21px;
        padding: 0;
        font: inherit;
        color: #000;
        background: #e1e1e1;
        border: 1px solid #adadad;
    }
    .r1 {
        margin-top: 7px;
        padding-left: 1px;
    }
    .r1 button:nth-child(1) { width: 64px; }
    .r1 button:nth-child(2) { width: 52px; margin-left: 5px; }
    .r1 button:nth-child(3) { width: 52px; margin-left: 7px; }
    .r1 button:nth-child(4) { width: 73px; margin-left: 6px; }
    .r2 {
        margin-top: 7px;
        padding-left: 2px;
    }
    .r2 .opt {
        width: 104px;
    }
    .r2 button { width: 73px; }
    .r2 .b1 { margin-right: 6px; }
    .dstrip {
        position: absolute;
        left: 3px;
        right: 4px;
        bottom: 3px;
        height: 6px;
        background: #e4e4e4;
    }

    /* pen marks on the screenshot */
    .ink {
        position: absolute;
        left: 0;
        top: 0;
        pointer-events: none;
    }
    .ink ellipse {
        fill: none;
        stroke: #f01cf0;
        stroke-width: 3;
    }
    .ink path {
        fill: none;
        stroke: #1adcdc;
        stroke-width: 3;
        stroke-linecap: round;
        stroke-linejoin: round;
    }
</style>
